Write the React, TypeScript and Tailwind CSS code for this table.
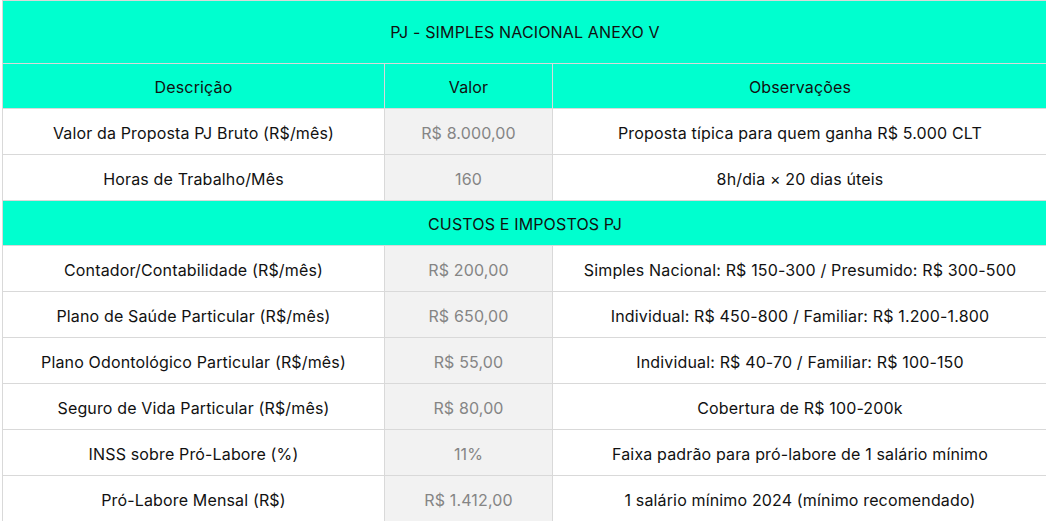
const linhas1 = [
  ["Valor da Proposta PJ Bruto (R$/mês)", "R$ 8.000,00", "Proposta típica para quem ganha R$ 5.000 CLT"],
  ["Horas de Trabalho/Mês", "160", "8h/dia × 20 dias úteis"],
];

const linhas2 = [
  ["Contador/Contabilidade (R$/mês)", "R$ 200,00", "Simples Nacional: R$ 150-300 / Presumido: R$ 300-500"],
  ["Plano de Saúde Particular (R$/mês)", "R$ 650,00", "Individual: R$ 450-800 / Familiar: R$ 1.200-1.800"],
  ["Plano Odontológico Particular (R$/mês)", "R$ 55,00", "Individual: R$ 40-70 / Familiar: R$ 100-150"],
  ["Seguro de Vida Particular (R$/mês)", "R$ 80,00", "Cobertura de R$ 100-200k"],
  ["INSS sobre Pró-Labore (%)", "11%", "Faixa padrão para pró-labore de 1 salário mínimo"],
  ["Pró-Labore Mensal (R$)", "R$ 1.412,00", "1 salário mínimo 2024 (mínimo recomendado)"],
];

function Linha({ row }: { row: string[] }) {
  return (
    <tr className="h-[46px]">
      <td className="border border-[#d9d9d9] pt-[2px] text-center">{row[0]}</td>
      <td className="border border-[#d9d9d9] bg-[#f2f2f2] pt-[2px] text-center text-[#858585]">{row[1]}</td>
      <td className="border border-[#d9d9d9] pt-[2px] text-center">{row[2]}</td>
    </tr>
  );
}

export default function App() {
  return (
    <div className="h-[521px] w-[1046px] overflow-hidden bg-white">
      <table
        className="ml-[2px] w-[1046px] table-fixed border-collapse text-[16px] tracking-[0.15px] text-[#111]"
        style={{ fontFamily: "Inter, 'Noto Sans', sans-serif" }}
      >
        <colgroup>
          <col className="w-[382px]" />
          <col className="w-[168px]" />
          <col />
        </colgroup>
        <tbody>
          <tr className="h-[63px] bg-[#00ffcf]">
            <td colSpan={3} className="border border-[#d9d9d9] text-center">
              PJ - SIMPLES NACIONAL ANEXO V
            </td>
          </tr>
          <tr className="h-[45px] bg-[#00ffcf]">
            <td className="border border-[#d9d9d9] pt-[2px] text-center">Descrição</td>
            <td className="border border-[#d9d9d9] pt-[2px] text-center">Valor</td>
            <td className="border border-[#d9d9d9] pt-[2px] text-center">Observações</td>
          </tr>
          {linhas1.map((r) => (
            <Linha key={r[0]} row={r} />
          ))}
          <tr className="h-[45px] bg-[#00ffcf]">
            <td colSpan={3} className="border border-[#d9d9d9] pt-[2px] text-center">
              CUSTOS E IMPOSTOS PJ
            </td>
          </tr>
          {linhas2.map((r) => (
            <Linha key={r[0]} row={r} />
          ))}
        </tbody>
      </table>
    </div>
  );
}
